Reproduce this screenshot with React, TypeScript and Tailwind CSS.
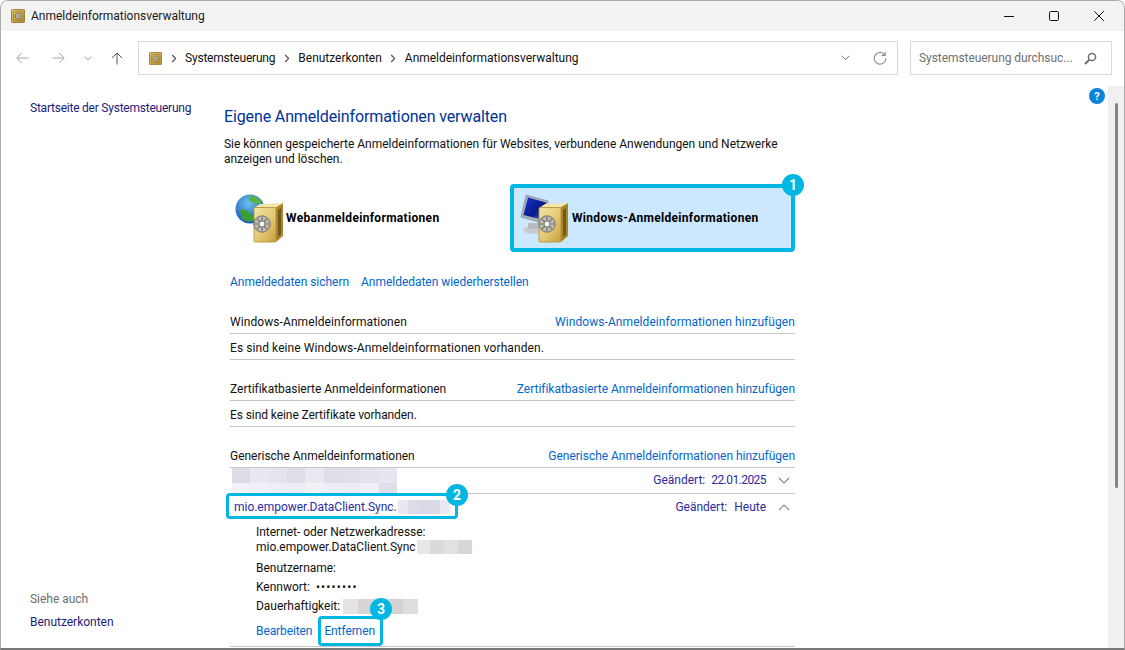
import React from "react";

const Safe = ({ size = 16 }: { size?: number }) => (
  <svg width={size} height={size} viewBox="0 0 16 16" className="shrink-0">
    <defs>
      <linearGradient id="sg" x1="0" y1="0" x2="1" y2="1">
        <stop offset="0" stopColor="#e3c26c" />
        <stop offset="1" stopColor="#b08a2e" />
      </linearGradient>
    </defs>
    <rect x="0.5" y="0.5" width="15" height="15" rx="1" fill="url(#sg)" stroke="#94732a" />
    <rect x="3" y="3" width="10" height="10" rx="1" fill="none" stroke="#8d7a44" strokeWidth="0.7" />
    <circle cx="8" cy="8" r="3.2" fill="#c9c2ad" stroke="#6f6650" strokeWidth="0.9" />
    <circle cx="8" cy="8" r="1.1" fill="#7d7663" />
  </svg>
);

const BigSafe = () => (
  <g>
    <path d="M41 14 L48 10 L48 43 L41 49 Z" fill="#a98528" />
    <path d="M43 17 L46 15 L46 41 L43 44 Z" fill="#6f5a24" />
    <path d="M19 15 L25 11 L48 10 L41 14 Z" fill="#f4e4a8" />
    <rect x="19" y="14.5" width="22" height="34.5" rx="1" fill="url(#gold)" stroke="#b38d30" strokeWidth="0.8" />
    <circle cx="27" cy="31" r="8.2" fill="#b9b9b2" stroke="#76766e" strokeWidth="1" />
    <circle cx="27" cy="31" r="3" fill="#f2f2ee" stroke="#7d7d75" strokeWidth="1" />
    <path d="M27 23.5 V28 M27 34 V38.5 M19.5 31 H24 M30 31 H34.5 M21.7 25.7 L25 29 M32.3 25.7 L29 29 M21.7 36.3 L25 33 M32.3 36.3 L29 33" stroke="#77776f" strokeWidth="1.1" />
  </g>
);

const Defs = () => (
  <defs>
    <linearGradient id="gold" x1="0" y1="0" x2="1" y2="1">
      <stop offset="0" stopColor="#f6e5a6" />
      <stop offset="0.55" stopColor="#e4c873" />
      <stop offset="1" stopColor="#c79e3e" />
    </linearGradient>
    <radialGradient id="glob" cx="0.45" cy="0.3" r="0.8">
      <stop offset="0" stopColor="#6ec0f0" />
      <stop offset="1" stopColor="#0b4aa8" />
    </radialGradient>
    <linearGradient id="scr" x1="0" y1="0" x2="1" y2="1">
      <stop offset="0" stopColor="#1a33c8" />
      <stop offset="0.6" stopColor="#08198c" />
      <stop offset="1" stopColor="#5a74e0" />
    </linearGradient>
  </defs>
);

const WebIcon = () => (
  <svg width="48" height="50" viewBox="0 0 48 50" className="shrink-0">
    <Defs />
    <circle cx="15" cy="16" r="14.5" fill="url(#glob)" />
    <path d="M5 17 C10 15 16 20 20 26 C18 30 9 29 7 25 Z" fill="#3f9e30" />
    <path d="M14 3 C19 2 25 6 27 10 C23 12 17 10 14 7 Z" fill="#58b43c" />
    <BigSafe />
  </svg>
);

const PcIcon = () => (
  <svg width="48" height="50" viewBox="0 0 48 50" className="shrink-0">
    <Defs />
    <ellipse cx="13" cy="37" rx="10" ry="4" fill="#c8ccd0" />
    <path d="M8 30 H18 V36 H8 Z" fill="#b8bcc2" />
    <path d="M6 2 L28 8 L26 31 L1 24 Z" fill="#a7aebb" stroke="#7f8797" strokeWidth="0.6" />
    <path d="M8 4.5 L26 9.5 L24 27 L3.5 22 Z" fill="url(#scr)" />
    <BigSafe />
  </svg>
);

const Badge = ({ n, className }: { n: string; className: string }) => (
  <div
    className={`absolute flex h-[22px] w-[22px] items-center justify-center rounded-full bg-[#00b7e3] text-[14px] font-bold tracking-normal text-white ${className}`}
  >
    {n}
  </div>
);

const Blur = ({ colors, className }: { colors: string[]; className: string }) => (
  <div className={`flex ${className}`}>
    {colors.map((c, i) => (
      <div key={i} className="h-full flex-1" style={{ backgroundColor: c }} />
    ))}
  </div>
);

const Section = ({ title, link, mt }: { title: string; link: string; mt: string }) => (
  <div className={`flex h-[26px] items-center justify-between border-b border-[#c8c8c8] pt-[3px] ${mt}`}>
    <span>{title}</span>
    <span className="text-[#0066cc]">{link}</span>
  </div>
);

const Chevron = ({ up }: { up?: boolean }) => (
  <svg width="12" height="8" viewBox="0 0 12 8" className="ml-[12px] mr-[5px]">
    <path d={up ? "M1 7 L6 2 L11 7" : "M1 1 L6 6 L11 1"} fill="none" stroke="#8a8a8a" strokeWidth="1.1" />
  </svg>
);

const Sep = () => (
  <svg width="6" height="9" viewBox="0 0 6 9" className="mx-[8.5px] shrink-0">
    <path d="M1.2 1 L4.6 4.5 L1.2 8" fill="none" stroke="#555" strokeWidth="1.2" />
  </svg>
);

export default function App() {
  return (
    <div className="relative flex h-[650px] w-[1125px] flex-col overflow-hidden rounded-t-lg border border-b-2 border-[#ababab] border-b-[#777] bg-white font-['Roboto',sans-serif] text-[12px] leading-[15px] tracking-[-0.02px] text-[#111]">
      {/* title bar */}
      <div className="flex h-[30px] shrink-0 items-center bg-[#f3f3f3] pl-[10px]">
        <Safe size={14} />
        <span className="ml-[6px] text-[#1a1a1a]">Anmeldeinformationsverwaltung</span>
        <div className="ml-auto flex items-center pr-[20px]">
          <svg width="10" height="10" viewBox="0 0 10 10" className="mr-[35px]">
            <path d="M0 5.5 H10" stroke="#111" strokeWidth="1" />
          </svg>
          <svg width="10" height="10" viewBox="0 0 10 10" className="mr-[35px]">
            <rect x="0.5" y="0.5" width="9" height="9" rx="1.2" fill="none" stroke="#111" strokeWidth="1" />
          </svg>
          <svg width="10" height="10" viewBox="0 0 10 10">
            <path d="M0.3 0.3 L9.7 9.7 M9.7 0.3 L0.3 9.7" stroke="#111" strokeWidth="1" />
          </svg>
        </div>
      </div>

      {/* toolbar */}
      <div className="flex h-[55px] shrink-0 items-center pb-[1px] pl-[15px] pr-[12px]">
        <svg width="13" height="12" viewBox="0 0 13 12">
          <path d="M12.5 6 H1 M5.8 1 L0.8 6 L5.8 11" fill="none" stroke="#a3a3a3" strokeWidth="1" />
        </svg>
        <svg width="13" height="12" viewBox="0 0 13 12" className="ml-[23px]">
          <path d="M0.5 6 H12 M7.2 1 L12.2 6 L7.2 11" fill="none" stroke="#a3a3a3" strokeWidth="1" />
        </svg>
        <svg width="8" height="5" viewBox="0 0 8 5" className="ml-[19px]">
          <path d="M0.5 0.5 L4 4 L7.5 0.5" fill="none" stroke="#a3a3a3" strokeWidth="1" />
        </svg>
        <svg width="12" height="13" viewBox="0 0 12 13" className="ml-[19px]">
          <path d="M6 12.5 V1 M1 6 L6 1 L11 6" fill="none" stroke="#555" strokeWidth="1" />
        </svg>
        <div className="ml-[15px] flex h-[34px] w-[760px] items-center border border-[#d9d9d9] pl-[10px] pr-[10px]">
          <Safe size={13} />
          <Sep />
          <span className="tracking-[-0.2px]">Systemsteuerung</span>
          <Sep />
          <span>Benutzerkonten</span>
          <Sep />
          <span>Anmeldeinformationsverwaltung</span>
          <svg width="9" height="6" viewBox="0 0 9 6" className="ml-auto">
            <path d="M0.5 0.7 L4.5 4.7 L8.5 0.7" fill="none" stroke="#707070" strokeWidth="1" />
          </svg>
          <svg width="14" height="14" viewBox="0 0 14 14" className="ml-[23px]">
            <path d="M11.6 3.8 A5.8 5.8 0 1 0 12.8 7" fill="none" stroke="#8a8a8a" strokeWidth="1.1" />
            <path d="M12.2 0.8 V4.4 H8.6" fill="none" stroke="#8a8a8a" strokeWidth="1.1" />
          </svg>
        </div>
        <div className="ml-auto flex h-[34px] w-[202px] items-center border border-[#d9d9d9] pl-[8px] pr-[14px] text-[#707070]">
          <span className="truncate tracking-[-0.06px]">Systemsteuerung durchsuc...</span>
          <svg width="13" height="13" viewBox="0 0 13 13" className="ml-auto shrink-0">
            <circle cx="8" cy="5" r="3.6" fill="none" stroke="#6d6d6d" strokeWidth="1.5" />
            <path d="M5.4 7.6 L1 12" stroke="#6d6d6d" strokeWidth="2" />
          </svg>
        </div>
      </div>

      {/* body */}
      <div className="flex min-h-0 flex-1">
        {/* sidebar */}
        <div className="flex w-[223px] shrink-0 flex-col pl-[29px] pt-[15px]">
          <span className="tracking-[-0.23px] text-[#1c1c78]">Startseite der Systemsteuerung</span>
          <span className="mt-auto text-[#6e6e6e]">Siehe auch</span>
          <span className="mb-[18px] mt-[8px] text-[#1c1c78]">Benutzerkonten</span>
        </div>

        {/* content */}
        <div className="min-w-0 flex-1 pt-[21px]">
          <h1 className="text-[16px] leading-[20px] tracking-[-0.13px] text-[#003399]">
            Eigene Anmeldeinformationen verwalten
          </h1>
          <p className="mt-[10px] w-[570px]">
            Sie können gespeicherte Anmeldeinformationen für Websites, verbundene Anwendungen und Netzwerke anzeigen und löschen.
          </p>

          <div className="ml-[6px] mt-[17px] w-[565px]">
            <div className="flex h-[68px] items-center text-[12px] font-bold tracking-[0.32px] text-black">
              <div className="flex w-[280px] items-center pl-[5px]">
                <WebIcon />
                <span className="ml-[3px]">Webanmeldeinformationen</span>
              </div>
              <div className="relative flex h-[68px] w-[285px] items-center rounded-[4px] border-4 border-[#00b7e3] bg-[#cce8ff] pl-[6px]">
                <PcIcon />
                <span className="ml-[4px]">Windows-Anmeldeinformationen</span>
                <Badge n="1" className="-right-[13px] -top-[14px]" />
              </div>
            </div>

            <div className="mt-[23px] flex gap-[12px] tracking-[-0.03px] text-[#0066cc]">
              <span>Anmeldedaten sichern</span>
              <span>Anmeldedaten wiederherstellen</span>
            </div>

            <div className="tracking-[0.08px]">
              <Section title="Windows-Anmeldeinformationen" link="Windows-Anmeldeinformationen hinzufügen" mt="mt-[18px]" />
              <div className="flex h-[26px] items-center border-b border-[#c8c8c8] pt-[3px]">
                Es sind keine Windows-Anmeldeinformationen vorhanden.
              </div>
            </div>

            <Section title="Zertifikatbasierte Anmeldeinformationen" link="Zertifikatbasierte Anmeldeinformationen hinzufügen" mt="mt-[15px]" />
            <div className="flex h-[26px] items-center border-b border-[#c8c8c8] pt-[3px] tracking-[-0.08px]">
              Es sind keine Zertifikate vorhanden.
            </div>

            <Section title="Generische Anmeldeinformationen" link="Generische Anmeldeinformationen hinzufügen" mt="mt-[15px]" />

            <div className="relative flex h-[26px] items-center justify-end border-b border-[#c8c8c8] text-[#2b2ba0]">
              <div className="absolute left-[2px] top-0 flex h-[25px] w-[165px] flex-col">
                <Blur className="h-[15px]" colors={["#dcdce8", "#e8e8f0", "#e4e4ee", "#dedee9", "#e9e9f1", "#dfdfea", "#e0e0ea", "#e3e3ec", "#e6e6ef"]} />
                <Blur className="h-[10px]" colors={["#f2f2f7", "#f0f0f6", "#eeeef5", "#ebebf3", "#f1f1f6", "#eeeef5", "#ececf4", "#f0f0f6", "#dfdfe9"]} />
              </div>
              <span>Geändert:</span>
              <span className="ml-[6px] tracking-[-0.55px]">22.01.2025</span>
              <Chevron />
            </div>

            <div className="relative flex h-[26px] items-center justify-end text-[#2b2ba0]">
              <span className="absolute left-[4px]">mio.empower.DataClient.Sync.</span>
              <Blur className="absolute left-[168px] top-[6px] h-[14px] w-[52px]" colors={["#e8e8f2", "#dcdce9", "#d8d8e6", "#dadae8", "#e9e9f2"]} />
              <div className="absolute -left-[4px] -top-[1px] h-[26px] w-[232px] rounded-[4px] border-[3px] border-[#00b7e3]" />
              <Badge n="2" className="left-[216px] -top-[10px]" />
              <span>Geändert:</span>
              <span className="ml-[7px]">Heute</span>
              <Chevron up />
            </div>

            <div className="pl-[26px] pt-[5px]">
              <div>Internet- oder Netzwerkadresse:</div>
              <div className="flex">
                <span>mio.empower.DataClient.Sync</span>
                <Blur className="ml-[1px] h-[14px] w-[55px]" colors={["#e8e6e6", "#dbd9d9", "#e2e0e0", "#d8d6d6"]} />
              </div>
              <div className="mt-[6px]">Benutzername:</div>
              <div className="mt-[4px]">
                Kennwort:<span className="ml-[6px] tracking-[1.2px]">••••••••</span>
              </div>
              <div className="mt-[4px] flex">
                <span>Dauerhaftigkeit:</span>
                <Blur className="ml-[3px] h-[15px] w-[75px]" colors={["#e6e3e3", "#d8d4d4", "#dcd8d8", "#d6d2d2", "#e0dddd"]} />
              </div>
              <div className="relative mt-[10px] flex tracking-[-0.1px] text-[#0066cc]">
                <span>Bearbeiten</span>
                <span className="ml-[12px]">Entfernen</span>
                <div className="absolute left-[62px] -top-[8px] h-[30px] w-[65px] rounded-[4px] border-[3px] border-[#00b7e3]" />
                <Badge n="3" className="left-[114px] -top-[26px]" />
              </div>
            </div>
            <div className="mt-[7px] border-b border-[#c8c8c8]" />
          </div>
        </div>

        {/* help */}
        <div className="flex h-[22px] w-[17px] shrink-0 items-start">
          <div className="ml-[1px] mt-[2px] flex h-[16px] w-[16px] items-center justify-center rounded-full bg-[#0a84d8] text-[11px] font-bold text-white">
            ?
          </div>
        </div>

        {/* scrollbar */}
        <div className="ml-[3px] flex w-[16px] shrink-0 justify-center bg-[#f0f0f0] pt-[17px]">
          <div className="h-[385px] w-[3px] rounded-full bg-[#858585]" />
        </div>
      </div>
    </div>
  );
}
